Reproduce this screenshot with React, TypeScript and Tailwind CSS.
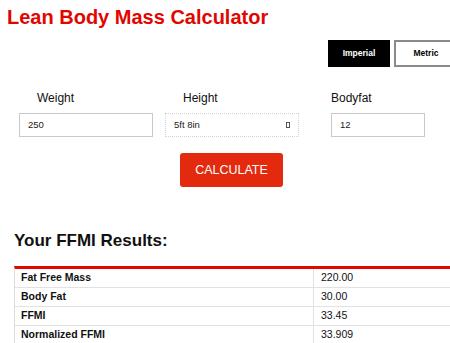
export default function App() {
  return (
    <div className="h-[343px] w-[450px] overflow-hidden bg-white font-['Liberation_Sans',Arial,sans-serif] text-black">
      <h1 className="mt-[5px] pl-[7px] text-[20px] font-bold leading-[24px] text-[#e10600]">
        Lean Body Mass Calculator
      </h1>

      <div className="mt-[11px] flex gap-[4px] pl-[328px]">
        <button className="h-[27px] w-[62px] shrink-0 bg-black text-[8.5px] font-bold text-white">
          Imperial
        </button>
        <button className="h-[27px] w-[64px] shrink-0 border-2 border-[#8a8a8a] bg-white text-[8.5px] font-bold text-black">
          Metric
        </button>
      </div>

      <div className="mt-[24px] flex">
        {fields.map(({ label, value, ml, w, lp, dotted }) => (
          <div key={label} className={`${ml} ${w} flex flex-col`}>
            <label className={`${lp} text-[12px] leading-[14px] text-[#111]`}>{label}</label>
            <div
              className={`mt-[8px] flex h-[24px] items-center bg-white pl-[8px] pr-[8px] text-[9.5px] text-[#222] ${
                dotted ? "border border-dotted border-[#d4d4d4]" : "border border-[#c9c9c9]"
              }`}
            >
              <span className="flex-1">{value}</span>
              {dotted && <span className="h-[6px] w-[4px] border border-[#555]" />}
            </div>
          </div>
        ))}
      </div>

      <div className="mt-[16px] pl-[180px]">
        <button className="h-[34px] w-[103px] rounded-[3px] bg-[#e32a0e] text-[12.5px] text-white">
          CALCULATE
        </button>
      </div>

      <h2 className="mt-[44px] pl-[14px] text-[17px] font-bold leading-[20px] text-[#111]">
        Your FFMI Results:
      </h2>

      <div className="ml-[14px] mt-[15px] w-[450px] border-l border-t-[3px] border-l-[#ddd] border-t-[#e10600]">
        {rows.map(([k, v]) => (
          <div key={k} className="flex h-[19px] border-b border-[#e2e2e2] text-[10.5px] text-[#111]">
            <div className="flex w-[299px] items-center border-r border-[#e2e2e2] pl-[6px] font-bold">
              {k}
            </div>
            <div className="flex items-center pl-[7px]">{v}</div>
          </div>
        ))}
      </div>
    </div>
  );
}

const fields = [
  { label: "Weight", value: "250", ml: "ml-[19px]", w: "w-[134px]", lp: "pl-[18px]", dotted: false },
  { label: "Height", value: "5ft 8in", ml: "ml-[12px]", w: "w-[134px]", lp: "pl-[18px]", dotted: true },
  { label: "Bodyfat", value: "12", ml: "ml-[32px]", w: "w-[94px]", lp: "pl-0", dotted: false },
];

const rows = [
  ["Fat Free Mass", "220.00"],
  ["Body Fat", "30.00"],
  ["FFMI", "33.45"],
  ["Normalized FFMI", "33.909"],
];
